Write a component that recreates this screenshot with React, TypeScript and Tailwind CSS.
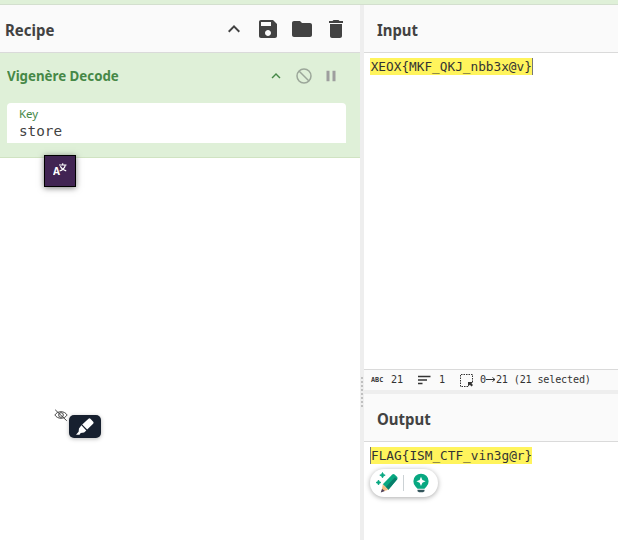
import type { ReactNode } from "react";

const mono = "font-['DejaVu_Sans_Mono',monospace]";

function MIcon({ d, className }: { d: string; className: string }) {
  return (
    <svg viewBox="0 0 24 24" fill="currentColor" className={`block shrink-0 ${className}`}>
      <path d={d} />
    </svg>
  );
}

const CHEVRON_UP = "M12 8l-6 6 1.41 1.41L12 10.83l4.59 4.58L18 14z";
const SAVE =
  "M17 3H5c-1.11 0-2 .9-2 2v14c0 1.1.89 2 2 2h14c1.1 0 2-.9 2-2V7l-4-4zm-5 16c-1.66 0-3-1.34-3-3s1.34-3 3-3 3 1.34 3 3-1.34 3-3 3zm3-10H5V5h10v4z";
const FOLDER = "M10 4H4c-1.1 0-1.99.9-1.99 2L2 18c0 1.1.9 2 2 2h16c1.1 0 2-.9 2-2V8c0-1.1-.9-2-2-2h-8l-2-2z";
const TRASH = "M6 19c0 1.1.9 2 2 2h8c1.1 0 2-.9 2-2V7H6v12zM19 4h-3.5l-1-1h-5l-1 1H5v2h14V4z";
const PAUSE = "M6 19h4V5H6v14zm8-14v14h4V5h-4z";

function PaneHeader({ children, className }: { children: ReactNode; className: string }) {
  return (
    <header
      className={`flex shrink-0 items-center border-b border-[#dadada] bg-[#fafafa] text-base font-bold text-[#424242] ${className}`}
    >
      {children}
    </header>
  );
}

function Recipe() {
  return (
    <section className="relative flex w-[360px] shrink-0 flex-col bg-white">
      <PaneHeader className="h-12 pl-[5px]">
        <h2 className="w-[49px] origin-left scale-x-[0.935] pt-0.5">Recipe</h2>
        <div className="ml-auto flex items-center pr-3">
          <MIcon d={CHEVRON_UP} className="mr-[10px] h-6 w-6" />
          <MIcon d={SAVE} className="mr-[10px] size-6" />
          <MIcon d={FOLDER} className="mr-[10px] size-6" />
          <MIcon d={TRASH} className="size-6" />
        </div>
      </PaneHeader>
      <div className="h-[105px] border-b border-[#d0e3c2] bg-[#dff0d8] pl-[7px] pr-[14px]">
        <div className="flex h-[50px] items-center pb-1 text-[#468847]">
          <h3 className="origin-left scale-x-[0.985] whitespace-nowrap pt-px text-[13.5px] font-bold">Vigenère Decode</h3>
          <div className="ml-auto flex items-center pr-[6px]">
            <MIcon d={CHEVRON_UP} className="mr-[10px] size-[18px]" />
            <svg viewBox="0 0 18 18" className="mr-[9px] size-[18px] text-[#9ca79a]" fill="none" stroke="currentColor" strokeWidth="1.5">
              <circle cx="9" cy="9" r="7" />
              <path d="M4 4l10 10" />
            </svg>
            <MIcon d={PAUSE} className="size-[18px] text-[#9e9e9e]" />
          </div>
        </div>
        <div className="h-10 rounded-t bg-white pl-3 pt-[5px]">
          <div className="text-[11.5px] leading-3 text-[#468847]">Key</div>
          <div className={`text-[14.3px] leading-[22px] text-[#424242] ${mono}`}>store</div>
        </div>
      </div>

      <div className="absolute left-11 top-[150px] flex size-8 items-center justify-center border border-black bg-[#412453] text-white shadow-[0_1px_6px_#777]">
        <svg viewBox="0 0 14 14" className="-ml-px -mt-1 size-[14px]">
          <text x="0" y="12.5" fontSize="10" fontWeight="700" fill="currentColor" className="font-['Noto_Sans',sans-serif]">A</text>
          <g fill="none" stroke="currentColor" strokeWidth="1.1">
            <path d="M6 3h7.5M9.7 1.2V3M7.3 4.3C8.2 6.2 10.2 8 13.2 8.9M12.2 3.5C11.6 6 9.5 8 6.6 9" />
          </g>
        </svg>
      </div>
      <svg viewBox="0 0 24 24" className="absolute left-[54px] top-[403px] size-[14px] text-[#444]" fill="none" stroke="currentColor" strokeWidth="1.7">
        <path d="M1.5 12C6 4.5 18 4.5 22.5 12 18 19.5 6 19.5 1.5 12z" />
        <circle cx="12" cy="12" r="4" />
        <path d="M2 3l20 19" />
      </svg>
      <div className="absolute left-[69px] top-[410px] flex h-[23px] w-8 items-center justify-center rounded-[5px] bg-[#17202f] shadow-[0_1px_4px_#bbb]">
        <svg viewBox="0 0 20 18" className="h-[18px] w-5" fill="white">
          <path d="M7.2 6.4L13.5.7q1-.8 1.9.1l2.8 3q.8 1-.1 1.9l-5.9 5.9z" />
          <path d="M6.4 7.3l4.9 5.2-2.2 2.1-3.4.5-1.2 1.7H1l2.6-3 .4-3.4z" />
        </svg>
      </div>
    </section>
  );
}

function Input() {
  return (
    <section className="flex h-[385px] shrink-0 flex-col bg-white">
      <PaneHeader className="h-12 pl-[13px]">
        <h2 className="origin-left scale-x-[0.93] pt-0.5">Input</h2>
      </PaneHeader>
      <div className={`flex flex-1 pl-1.5 pt-[5px] text-[12.76px] leading-[17px] text-[#333] ${mono}`}>
        <span className="h-[17px] border-r border-[#777] bg-[#fff45c] pl-[0.7px]">{"XEOX{MKF_QKJ_nbb3x@v}"}</span>
      </div>
      <footer className={`flex h-[21px] items-center border-t border-[#dadada] bg-[#fafafa] pl-[7px] text-[10.15px] text-[#333] ${mono}`}>
        <span className="w-5 text-[6.8px] font-bold leading-none">ABC</span>
        <span className="w-[27px]">21</span>
        <svg viewBox="0 0 13 10" className="mr-2 h-[10px] w-[13px]" stroke="currentColor" strokeWidth="1.5">
          <path d="M0 1.5h12.5M0 5h9M0 8.5h4.5" />
        </svg>
        <span className="w-[21px]">1</span>
        <svg viewBox="0 0 13 13" className="mr-[7px] size-[13px]" fill="none" stroke="currentColor">
          <path d="M.5 1v11.5H8M1 .5h11.5V8" strokeDasharray="1.5 1" />
          <path d="M8 8h5l-1.5 1.5L13 11l-1.5 1.5-1.7-1.7L8 12.5z" fill="currentColor" stroke="none" />
        </svg>
        <span className="flex whitespace-pre tracking-[-0.17px]">
          0
          <svg viewBox="0 0 10 13" className="h-[13px] w-[10px] self-center" stroke="currentColor" fill="none">
            <path d="M0 6.5h9M6.5 4.5l2.5 2-2.5 2" />
          </svg>
          21 (21 selected)
        </span>
      </footer>
    </section>
  );
}

function Output() {
  return (
    <section className="relative flex flex-1 flex-col bg-white">
      <PaneHeader className="h-12 pl-[13px]">
        <h2 className="origin-left scale-x-[0.935] pt-0.5">Output</h2>
      </PaneHeader>
      <div className={`flex pl-1.5 pt-[5px] text-[12.76px] leading-[17px] text-[#333] ${mono}`}>
        <span className="h-[17px] border-l border-[#777] bg-[#fff45c]">{"FLAG{ISM_CTF_vin3g@r}"}</span>
      </div>
      <div className="absolute left-1.5 top-[75px] flex h-7 w-[68px] items-center rounded-full bg-white shadow-[0_1px_5px_#aaa]">
        <svg viewBox="0 0 34 28" className="h-7 w-[34px]">
          <g fill="#08a881">
            <path d="M12.5 3.5l.9 1.8 1.8.9-1.8.9-.9 1.8-.9-1.8-1.8-.9 1.8-.9z" stroke="#08a881" strokeWidth=".8" />
            <path d="M8.5 11l.8 1.7 1.7.8-1.7.8-.8 1.7-.8-1.7-1.7-.8 1.7-.8z" stroke="#08a881" strokeWidth=".8" />
            <path d="M12.8 15.3L22 5.7q1.3-1.2 2.6-.1l2.4 2.1q1.2 1.2.2 2.6l-8.8 10.5z" />
          </g>
          <path d="M18.4 20.8L27.2 10.3l-2.2-2L15.8 18z" fill="#087f6b" />
          <path d="M12.8 15.3l5.6 5.5-7 2.2z" fill="#f0bd83" />
          <path d="M12 19.8l2.8 2.2-4 1.5z" fill="#4b3f5c" />
        </svg>
        <div className="-ml-px h-4 w-px bg-[#ccd2d5]" />
        <svg viewBox="0 0 34 28" className="h-7 w-[34px]">
          <path d="M11.5 17.5a7.6 7.6 0 1 1 11 0l-2 2.3h-7z" fill="#08a881" />
          <path d="M17 7.7l1.4 3.2 3.2 1.4-3.2 1.4L17 16.9l-1.4-3.2-3.2-1.4 3.2-1.4z" fill="white" />
          <path d="M13.5 20.8h7v1.5l-1.5 1h-4l-1.5-1z" fill="#31545b" />
        </svg>
      </div>
    </section>
  );
}

export default function App() {
  return (
    <div className="flex h-[540px] w-[618px] flex-col overflow-hidden bg-[#dff0d8] font-['Noto_Sans',sans-serif]">
      <div className="h-[5px] shrink-0 border-b border-[#d3dfce]" />
      <main className="flex min-h-0 flex-1">
        <Recipe />
        <div className="flex w-1 shrink-0 items-end justify-center bg-[#eee] pb-[133px]">
          <div className="flex flex-col gap-[2px]">
            {Array.from({ length: 8 }, (_, i) => (
              <i key={i} className="block size-[2px] bg-[#c0c0c0]" />
            ))}
          </div>
        </div>
        <div className="flex min-w-0 flex-1 flex-col">
          <Input />
          <div className="h-1 shrink-0 bg-[#eee]" />
          <Output />
        </div>
      </main>
    </div>
  );
}
